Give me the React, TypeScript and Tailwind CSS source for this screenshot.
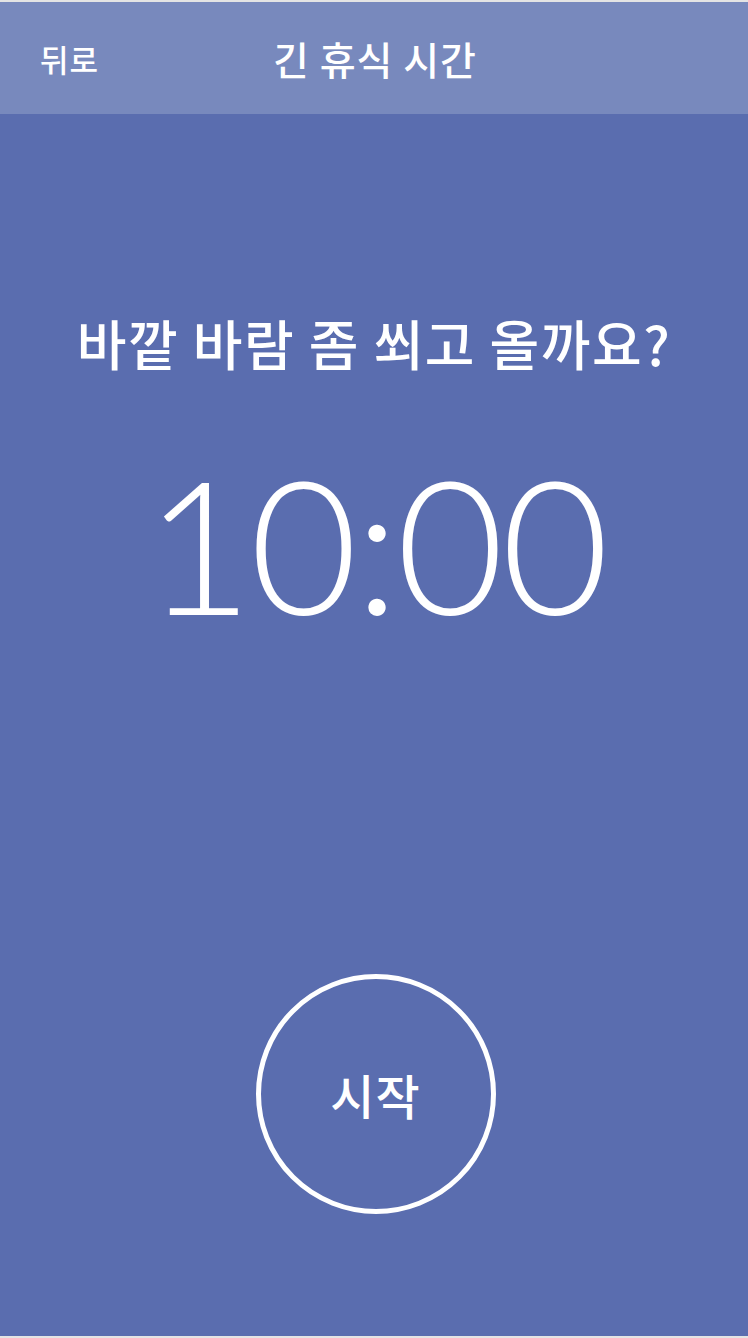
import React from 'react';

export default function App() {
  const kr = { fontFamily: '"Noto Sans CJK KR", "Noto Sans", sans-serif' };

  return (
    <div className="flex min-h-screen flex-col bg-[#5a6daf] border-t-2 border-b-2 border-[#e4e4e4] text-white" style={kr}>
      {/* Header */}
      <header className="relative flex h-[112px] shrink-0 items-center justify-center bg-[#7889bd]">
        <button className="absolute left-[40px] top-1/2 -translate-y-1/2 text-[31px] font-medium leading-none tracking-[1px]">뒤로</button>
        <h1 className="ml-[2px] text-[39px] font-medium leading-none tracking-[1px]">긴 휴식 시간</h1>
      </header>

      {/* Main */}
      <main className="flex flex-1 flex-col items-center">
        <h2 className="mt-[197px] text-[54px] font-medium leading-[64px] tracking-[1.5px]">바깥 바람 좀 쐬고 올까요?</h2>

        <div
          className="mt-[75px] pl-[3px] text-[186px] font-light leading-none tracking-[-3px]"
          style={{ fontFamily: 'Lato, "Liberation Sans", sans-serif' }}
        >
          10:00
        </div>

        <button className="mt-[338px] ml-[3px] flex h-[240px] w-[240px] items-center justify-center rounded-full border-[5px] border-white text-[48px] font-medium leading-none tracking-[1px]">
          시작
        </button>
      </main>
    </div>
  );
}
